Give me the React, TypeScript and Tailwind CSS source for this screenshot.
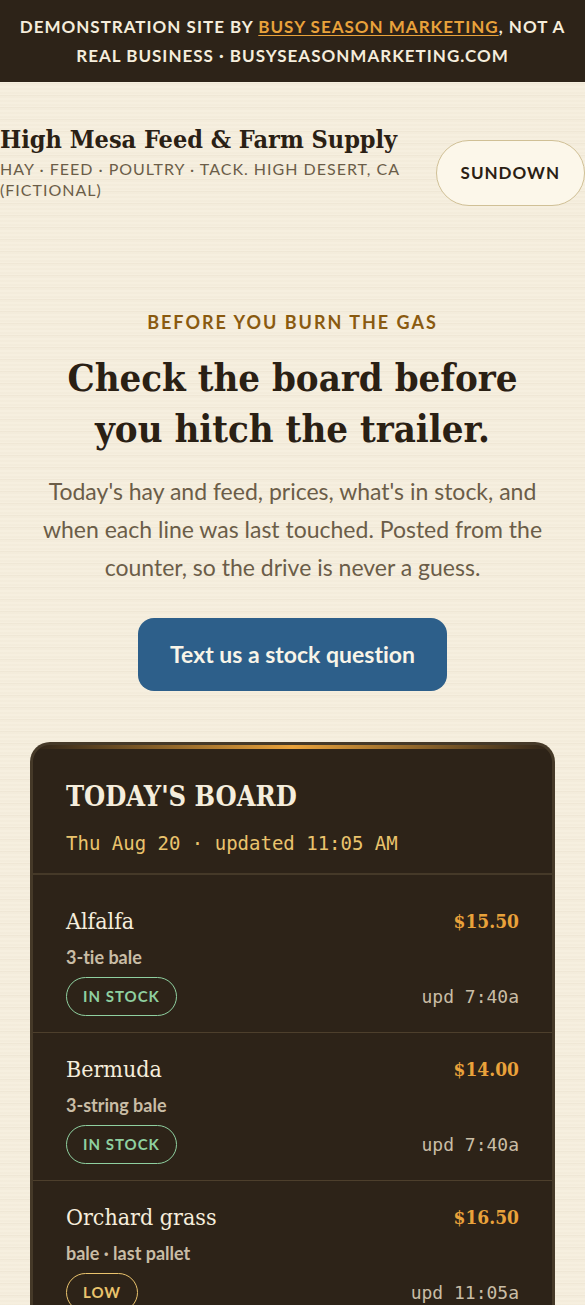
import React from 'react';

type Status = 'IN STOCK' | 'LOW';

interface BoardLine {
  name: string;
  unit: string;
  price: string;
  status: Status;
  updated: string;
}

const lines: BoardLine[] = [
  { name: 'Alfalfa', unit: '3-tie bale', price: '$15.50', status: 'IN STOCK', updated: 'upd 7:40a' },
  { name: 'Bermuda', unit: '3-string bale', price: '$14.00', status: 'IN STOCK', updated: 'upd 7:40a' },
  { name: 'Orchard grass', unit: 'bale · last pallet', price: '$16.50', status: 'LOW', updated: 'upd 11:05a' },
];

const statusStyles: Record<Status, string> = {
  'IN STOCK': 'border-[#8fd0a0] text-[#8fd0a0]',
  LOW: 'border-[#eac36d] text-[#eac36d]',
};

const DemoBar: React.FC = () => (
  <div className="bg-[#2d2318] px-4 py-3 text-center text-[17px] leading-[29px] font-bold uppercase tracking-[1px] text-[#f5eddc]">
    Demonstration site by{' '}
    <a href="#agency" className="text-[#e9a23b] underline underline-offset-2">Busy Season Marketing</a>, not a real
    business · busyseasonmarketing.com
  </div>
);

const Header: React.FC = () => (
  <header className="flex items-end justify-between gap-6 pt-10 pb-10">
    <div className="min-w-0 flex-1 pb-1.5">
      <a href="#top" className="block font-['DejaVu_Serif_Condensed','DejaVu_Serif',serif] text-[25px] leading-9 font-bold text-[#2a2014]">
        High Mesa Feed &amp; Farm Supply
      </a>
      <p className="text-base leading-[21px] uppercase tracking-[1px] text-[#6b5d48]">
        Hay · Feed · Poultry · Tack. High Desert, CA (fictional)
      </p>
    </div>
    <button type="button" className="h-[66px] rounded-full border border-[#d0c096] bg-[#fcf7ea] px-6 text-[17px] font-bold uppercase tracking-[1px] text-[#2a2014]">
      Sundown
    </button>
  </header>
);

const Hero: React.FC = () => (
  <section className="px-[30px] pt-[62px] text-center">
    <p className="text-lg leading-7 font-bold uppercase tracking-[2px] text-[#8a5a0f]">Before you burn the gas</p>
    <h1 className="mt-4 font-['DejaVu_Serif_Condensed','DejaVu_Serif',serif] text-[38px] leading-[51px] font-bold text-[#2a2014]">
      Check the board before you hitch the trailer.
    </h1>
    <p className="mt-[18px] text-[23px] leading-[38px] text-[#6b5d48]">
      Today's hay and feed, prices, what's in stock, and when each line was last touched. Posted from the counter, so
      the drive is never a guess.
    </p>
    <a href="#text" className="mt-8 inline-flex h-[73px] items-center rounded-2xl bg-[#2d5f8a] px-8 text-[23px] font-bold text-[#f8f4e8]">
      Text us a stock question
    </a>
  </section>
);

const BoardRow: React.FC<{ line: BoardLine }> = ({ line }) => (
  <li className="border-b border-[#4d3f2c] px-[33px] pt-5 pb-4">
    <div className="flex items-center justify-between leading-8">
      <h3 className="font-['DejaVu_Serif_Condensed','DejaVu_Serif',serif] text-[23px] text-[#f5eddc]">{line.name}</h3>
      <span className="font-['DejaVu_Serif_Condensed','DejaVu_Serif',serif] text-[19px] font-bold text-[#e9a23b]">{line.price}</span>
    </div>
    <p className="mt-1 text-lg leading-8 font-bold text-[#c9bda6]">{line.unit}</p>
    <div className="mt-1 flex items-center justify-between">
      <span className={`rounded-full border px-4 text-[15px] leading-[37px] font-bold tracking-[1px] ${statusStyles[line.status]}`}>
        {line.status}
      </span>
      <span className="font-['DejaVu_Sans_Mono',monospace] text-lg text-[#c9bda6]">{line.updated}</span>
    </div>
  </li>
);

const Board: React.FC = () => (
  <section className="mx-[30px] mt-[51px] overflow-hidden rounded-t-[20px] border-[3px] border-b-0 border-[#453928] bg-[#2d2318]">
    {/* Lamp glow along the top edge */}
    <div className="h-1 bg-linear-to-r from-transparent via-[#e9a23b] to-transparent"></div>
    <div className="border-b-2 border-[#453928] px-[33px] pt-7 pb-3">
      <h2 className="font-['DejaVu_Serif_Condensed','DejaVu_Serif',serif] text-[27px] leading-10 font-bold uppercase text-[#f5eddc]">Today's board</h2>
      <p className="mt-2 font-['DejaVu_Sans_Mono',monospace] text-[19px] leading-9 text-[#eac36d]">Thu Aug 20 · updated 11:05 AM</p>
    </div>
    <ul className="pt-2.5">
      {lines.map((line) => (
        <BoardRow key={line.name} line={line} />
      ))}
    </ul>
  </section>
);

const App: React.FC = () => (
  <div className="min-h-screen bg-[#f6efdf] bg-[repeating-linear-gradient(180deg,transparent_0px,transparent_11px,rgba(120,90,40,0.05)_11px,rgba(120,90,40,0.05)_12px),repeating-linear-gradient(180deg,rgba(120,90,40,0.02)_0px,rgba(120,90,40,0.02)_2px,transparent_2px,transparent_4px)] font-[Lato,'Liberation_Sans',sans-serif] [font-variant-ligatures:none]">
    <DemoBar />
    <Header />
    <main>
      <Hero />
      <Board />
    </main>
  </div>
);

export default App;
